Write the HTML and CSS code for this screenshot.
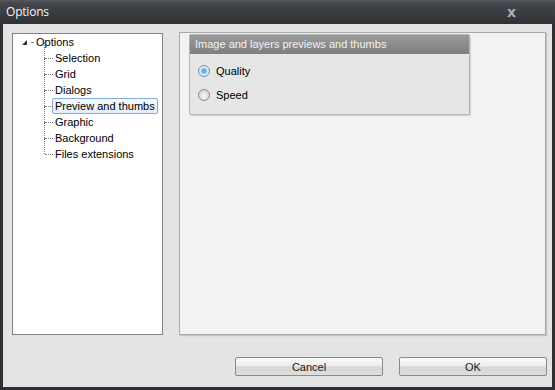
FILE: index.html
```html
<!DOCTYPE html>
<html>
<head>
    <link rel="stylesheet" href="styles.css">
</head>
<body>
    <div class="window">
        <div class="title-bar">
            <span class="title">Options</span>
            <span class="close">x</span>
        </div>
        <div class="content">
            <div class="main">
                <div class="tree">
                    <div class="root">
                        <span class="arrow"></span>
                        <span class="dot"></span>
                        <span class="label">Options</span>
                    </div>
                    <div class="children">
                        <div class="node"><span class="label">Selection</span></div>
                        <div class="node"><span class="label">Grid</span></div>
                        <div class="node"><span class="label">Dialogs</span></div>
                        <div class="node"><span class="label selected">Preview and thumbs</span></div>
                        <div class="node"><span class="label">Graphic</span></div>
                        <div class="node"><span class="label">Background</span></div>
                        <div class="node last"><span class="label">Files extensions</span></div>
                    </div>
                </div>
                <div class="page">
                    <div class="group">
                        <div class="group-head">Image and layers previews and thumbs</div>
                        <div class="group-body">
                            <label class="radio"><span class="bullet checked"></span>Quality</label>
                            <label class="radio"><span class="bullet"></span>Speed</label>
                        </div>
                    </div>
                </div>
            </div>
            <div class="footer">
                <button class="btn">Cancel</button>
                <button class="btn">OK</button>
            </div>
        </div>
    </div>
</body>
</html>
```

FILE: styles.css
```css
body {
    margin: 0;
    background-color: #2e3034;
    font-family: "Liberation Sans", Arial, sans-serif;
    font-size: 11px;
    color: #000;
}

.window {
    width: 555px;
    height: 390px;
    display: flex;
    flex-direction: column;
    background-color: #2e3034;
}

.title-bar {
    height: 24px;
    display: flex;
    align-items: center;
    justify-content: space-between;
    padding: 0 6px 0 6px;
    background: linear-gradient(#55585d 0px, #45484c 3px, #3c3f43 10px, #2f3135 24px);
    box-sizing: border-box;
}
.title {
    color: #f4f4f4;
    font-family: "Open Sans", sans-serif;
    font-size: 12px;
    letter-spacing: -0.2px;
    margin-top: -1px;
}
.close {
    color: #a9b1ba;
    font-family: "DejaVu Sans", sans-serif;
    font-weight: bold;
    font-size: 14px;
    margin-right: 33px;
    margin-top: -1px;
}

.content {
    flex: 1;
    margin: 0 3px 3px 3px;
    background-color: #e4e4e4;
    display: flex;
    flex-direction: column;
    padding: 9px 5px 0 9px;
}

.main {
    display: flex;
    gap: 16px;
    height: 302px;
}

.tree {
    width: 151px;
    box-sizing: border-box;
    background-color: #fff;
    border: 1px solid #828282;
}
.root {
    height: 16px;
    display: flex;
    align-items: center;
    padding-left: 9px;
}
.arrow {
    width: 0;
    height: 0;
    border-left: 5px solid transparent;
    border-bottom: 5px solid #333;
    margin-right: 4px;
}
.dot {
    width: 2px;
    border-top: 1px dotted #888;
    margin-right: 3px;
}
.children {
    margin-left: 31px;
}
.node {
    height: 16px;
    display: flex;
    align-items: center;
    position: relative;
    padding-left: 8px;
}
.node::before {
    content: "";
    position: absolute;
    left: 0;
    top: -8px;
    height: 16px;
    border-left: 1px dotted #808080;
}
.node::after {
    content: "";
    position: absolute;
    left: 1px;
    top: 8px;
    width: 8px;
    border-top: 1px dotted #808080;
}
.node .label {
    padding: 1px 2px;
    border: 1px solid transparent;
    border-radius: 2px;
}
.label.selected {
    border-color: #84acdd;
    background: linear-gradient(#f3f8fd, #e2eefb);
}

.page {
    width: 367px;
    box-sizing: border-box;
    background-color: #f2f2f2;
    border: 1px solid #a8a8a8;
    box-shadow: 1px 1px 1px #c4c4c4;
    padding: 1px 0 0 9px;
    margin-top: -1px;
}
.group {
    width: 281px;
    box-sizing: border-box;
    border: 1px solid #b4b4b4;
    border-radius: 2px;
    background-color: #e6e6e6;
    box-shadow: 1px 1px 1px #d0d0d0;
}
.group-head {
    height: 19px;
    line-height: 19px;
    padding-left: 5px;
    color: #f2f2f2;
    background: linear-gradient(#9a9a9a, #7f7f7f);
}
.group-body {
    padding: 10px 0 13px 8px;
    display: flex;
    flex-direction: column;
    gap: 11px;
}
.radio {
    display: flex;
    align-items: center;
    height: 13px;
}
.bullet {
    width: 12px;
    height: 12px;
    box-sizing: border-box;
    border-radius: 50%;
    border: 1px solid #8a8a8a;
    background: radial-gradient(circle at 50% 60%, #fafafa 0, #d6d6d6 70%);
    margin-right: 6px;
}
.bullet.checked {
    border-color: #6e8fb3;
    background: radial-gradient(circle, #4ea2e8 0, #7fc0f0 2.5px, #d9e9f7 3.6px, #e8eef5 5px);
}

.footer {
    display: flex;
    justify-content: flex-end;
    gap: 16px;
    padding-top: 22px;
}
.btn {
    width: 148px;
    height: 19px;
    border: 1px solid #8a8a8a;
    border-radius: 2px;
    background: linear-gradient(#fbfbfb, #ececec 45%, #d6d6d6 55%, #dedede);
    font-family: "Liberation Sans", Arial, sans-serif;
    font-size: 11px;
    color: #1a1a1a;
    padding: 0;
}
```
